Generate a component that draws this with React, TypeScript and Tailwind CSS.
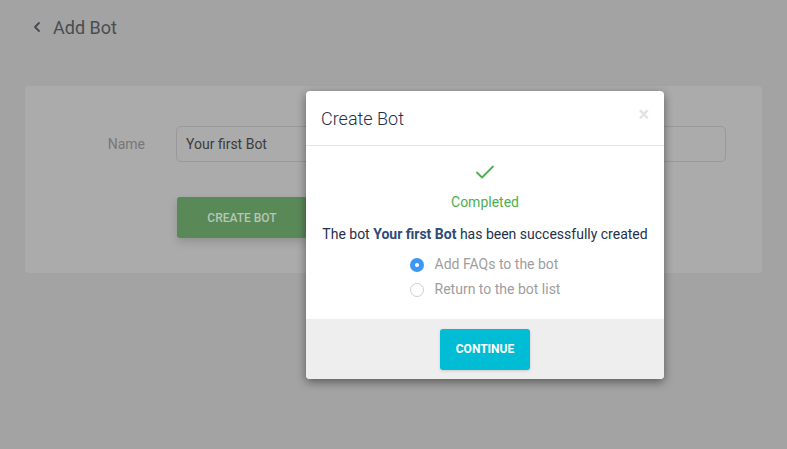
export default function App() {
  return (
    <div className="relative w-[787px] h-[449px] overflow-hidden bg-[#a3a3a3] font-['Roboto',sans-serif]">
      {/* page behind the overlay */}
      <div className="flex items-center gap-[10px] pl-[31px] pt-[15px] h-[24px] box-content">
        <svg width="12" height="12" viewBox="0 0 12 12" fill="none">
          <path d="M8 2 L4 6 L8 10" stroke="#454a52" strokeWidth="1.8" strokeLinecap="round" strokeLinejoin="round" />
        </svg>
        <span className="text-[18px] text-[#4a4d52] leading-none mt-[1px]">Add Bot</span>
      </div>

      <div className="mt-[47px] mx-[25px] h-[187px] rounded-[4px] bg-[#ababab] pt-[40px]">
        <div className="flex items-center">
          <span className="w-[120px] text-right text-[14px] text-[#777]">Name</span>
          <div className="ml-[31px] w-[550px] h-[36px] rounded-[5px] border border-[#999] flex items-center px-[9px] text-[14px] text-[#3b3b3b]">
            Your first Bot
          </div>
        </div>
        <div className="ml-[152px] mt-[35px] w-[130px] h-[41px] rounded-[3px] bg-[#5a8958] shadow-[0_4px_8px_rgba(0,0,0,0.15)] flex items-center justify-center text-[12px] font-medium text-[#b7c6b6]">
          CREATE BOT
        </div>
      </div>

      {/* modal */}
      <div className="absolute left-[306px] top-[91px] w-[358px] h-[288px] rounded-[4px] bg-white shadow-[0_3px_10px_rgba(0,0,0,0.45)] flex flex-col overflow-hidden">
        <div className="h-[55px] border-b border-[#e4e4e4] flex items-center justify-between pl-[15px] pr-[15px]">
          <span className="text-[18px] font-light text-[#25304a] mt-[1px]">Create Bot</span>
          <span className="text-[20px] text-[#e3e3e3] font-bold leading-none -mt-[8px]">×</span>
        </div>
        <div className="flex-1 flex flex-col items-center pt-[18px]">
          <svg width="20" height="16" viewBox="0 0 20 16" fill="none">
            <path d="M2 8.5 L7 13.5 L18 2.5" stroke="#4caf50" strokeWidth="1.8" strokeLinecap="round" strokeLinejoin="round" />
          </svg>
          <div className="mt-[12px] text-[14px] text-[#4caf50]">Completed</div>
          <div className="mt-[11px] text-[14px] text-[#25304a]">
            The bot <span className="font-bold text-[#2e4a78]">Your first Bot</span> has been successfully created
          </div>
          <div className="mt-[9px] flex flex-col gap-[4px]">
            <div className="flex items-center gap-[11px] text-[14px] text-[#9e9e9e]">
              <span className="w-[14px] h-[14px] rounded-full bg-[#3d97f5] flex items-center justify-center">
                <span className="w-[4px] h-[4px] rounded-full bg-white" />
              </span>
              Add FAQs to the bot
            </div>
            <div className="flex items-center gap-[11px] text-[14px] text-[#9e9e9e]">
              <span className="w-[14px] h-[14px] rounded-full border border-[#cfcfcf]" />
              Return to the bot list
            </div>
          </div>
        </div>
        <div className="h-[60px] bg-[#eeeeee] flex items-center justify-center">
          <div className="w-[90px] h-[41px] rounded-[3px] bg-[#00bcd4] shadow-[0_1px_3px_rgba(0,0,0,0.15)] flex items-center justify-center text-[12px] font-bold text-white">
            CONTINUE
          </div>
        </div>
      </div>
    </div>
  );
}
